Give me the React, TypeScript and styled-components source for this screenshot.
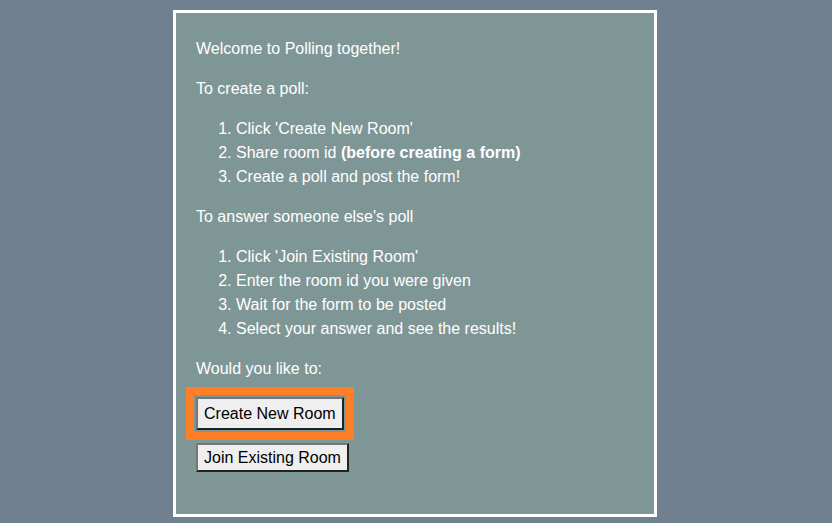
import React from "react";
import styled, { createGlobalStyle } from "styled-components";

const Global = createGlobalStyle`
  html, body { margin: 0; padding: 0; background: #708090; }
  body { font-family: "Liberation Sans", Arial, sans-serif; }
`;

const Page = styled.div`
  display: flex;
  justify-content: center;
  padding-top: 10px;
  padding-right: 2px;
`;

const Card = styled.div`
  box-sizing: border-box;
  width: 484px;
  height: 507px;
  border: 3px solid #ffffff;
  background: #7f9696;
  padding: 8px 20px 0 20px;
  color: #ffffff;
  font-size: 16px;
  line-height: 24px;
`;

const Para = styled.p`
  margin: 16px 0;
`;

const List = styled.ol`
  margin: 16px 0;
  padding-left: 40px;
`;

const Item = styled.li``;

const Strong = styled.b`
  font-weight: bold;
`;

const ButtonRow = styled.div<{ $gap?: number }>`
  display: flex;
  margin-top: ${(p) => p.$gap ?? 0}px;
`;

const Button = styled.button<{ $focused?: boolean }>`
  font-family: "Liberation Sans", Arial, sans-serif;
  font-size: 16px;
  line-height: 19px;
  color: #000;
  background: #efefef;
  padding: ${(p) => (p.$focused ? "5px 6px" : "3px 6px")};
  border-style: solid;
  border-width: 2px;
  border-color: #767676 #222222 #222222 #767676;
  outline: ${(p) => (p.$focused ? "8px solid #ff7f27" : "none")};
  outline-offset: 2px;
  cursor: pointer;
`;

export default function App() {
  return (
    <>
      <Global />
      <Page>
        <Card>
          <Para>Welcome to Polling together!</Para>
          <Para>To create a poll:</Para>
          <List>
            <Item>Click 'Create New Room'</Item>
            <Item>
              Share room id <Strong>(before creating a form)</Strong>
            </Item>
            <Item>Create a poll and post the form!</Item>
          </List>
          <Para>To answer someone else's poll</Para>
          <List>
            <Item>Click 'Join Existing Room'</Item>
            <Item>Enter the room id you were given</Item>
            <Item>Wait for the form to be posted</Item>
            <Item>Select your answer and see the results!</Item>
          </List>
          <Para>Would you like to:</Para>
          <ButtonRow>
            <Button $focused>Create New Room</Button>
          </ButtonRow>
          <ButtonRow $gap={13}>
            <Button>Join Existing Room</Button>
          </ButtonRow>
        </Card>
      </Page>
    </>
  );
}
